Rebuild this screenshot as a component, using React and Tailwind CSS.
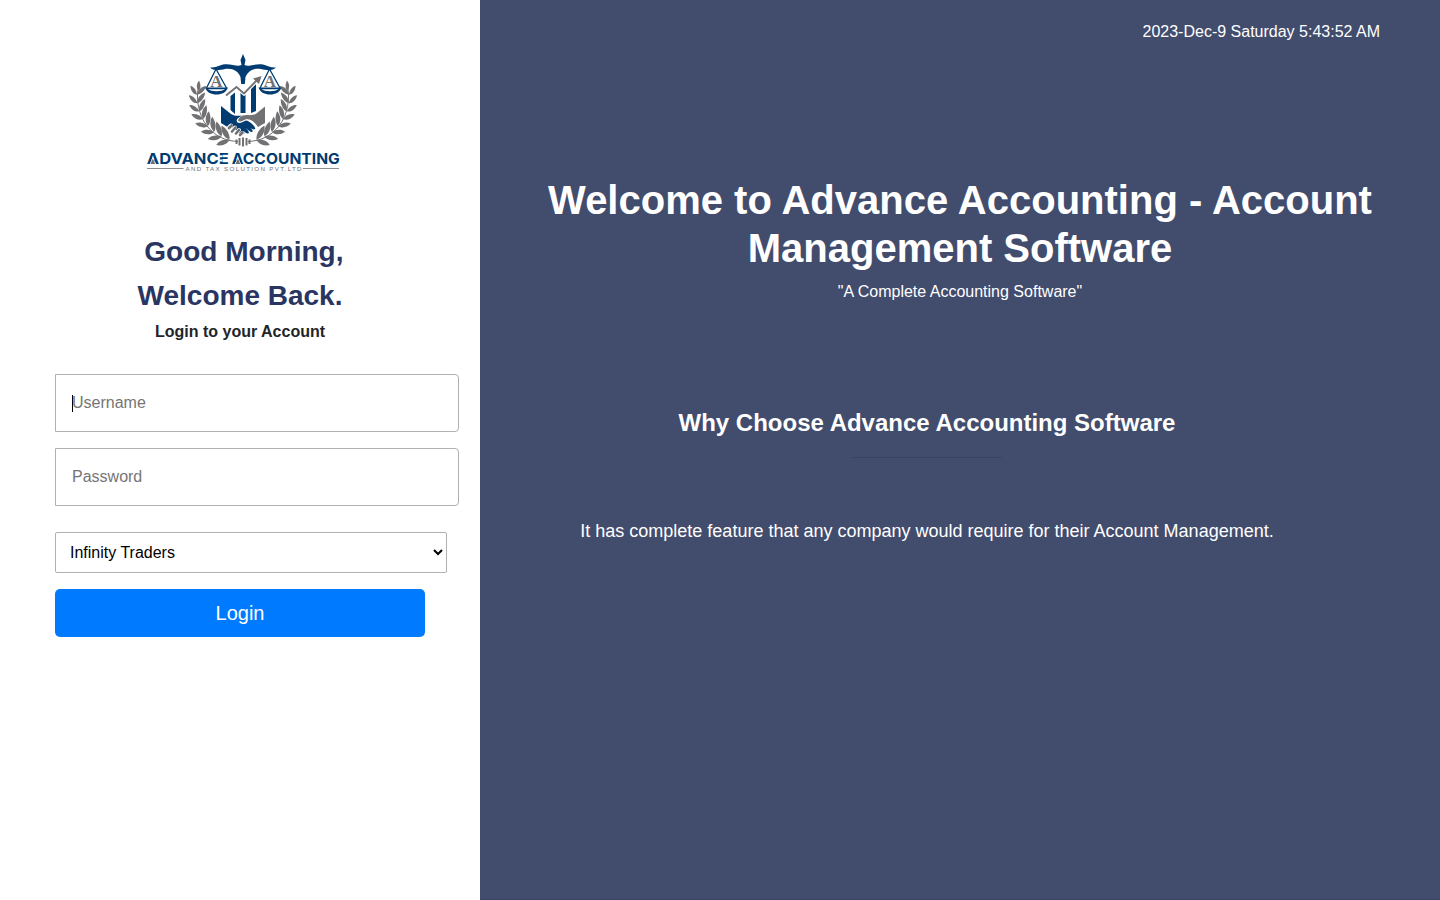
import React from 'react';

const NAVY = '#003c71';
const GRAY = '#717073';

// Leaves of one laurel branch, spaced along an arc that runs from the upper tip to the base.
const leaves = Array.from({ length: 8 }, (_, i) => {
  const deg = 184 - i * 10.8;
  const a = (deg * Math.PI) / 180;
  return { x: 243 + 46 * Math.cos(a), y: 97 + 44.5 * Math.sin(a), dir: deg + 90, size: 0.85 + i * 0.035 };
});

function Laurel() {
  return (
    <g fill={GRAY}>
      <path d="M198.500 86C196 99 198 114 207 126C215 136 225 141 238 141.500" fill="none" stroke={GRAY} strokeWidth="1" />
      {leaves.map((l, i) => (
        <g key={i} transform={`translate(${l.x} ${l.y}) rotate(${l.dir}) scale(${l.size})`}>
          <path d="M-1 0C-1 -4 3 -8 9 -8.500C8 -4 4 -1 -1 0Z" />
          <path d="M-1 0C4 0 9 4 10 10C5 9 0 5 -1 0Z" />
        </g>
      ))}
      <path d="M198.500 91C196 87 196.500 84 199 80.500C201 85 201 88 198.500 91Z" />
    </g>
  );
}

function Scale() {
  return (
    <g>
      <path d="M216 69L206.500 88M216 69L226.500 88" stroke={NAVY} strokeWidth="1.300" fill="none" />
      <path d="M205 87.500H228C226 92.500 222 94.500 216.500 94.500C211 94.500 207 92.500 205 87.500Z" fill={NAVY} />
      <path d="M208 89.300H225C222 91.800 211 91.800 208 89.300Z" fill="#fff" />
      <text x="216.300" y="86.500" textAnchor="middle" fontFamily="Liberation Serif, serif" fontSize="17" fontWeight="700" fill={GRAY}>A</text>
    </g>
  );
}

function Logo() {
  return (
    <svg width="206" height="130" viewBox="140 48 206 130" role="img" aria-label="Advance Accounting" className="block">
      <Laurel />
      <g transform="matrix(-1 0 0 1 486 0)"><Laurel /></g>
      <path d="M236.500 139.500v4.500M239.500 138v7.500M243 137.500v9M246.500 138v7.500M249.500 139.500v4.500" stroke={GRAY} strokeWidth="2" />
      <path d="M243 54L245.500 60L244.500 65C249 67.500 255 63 263 64.500C268 66 271 68 276 67.500C272 71.500 266 70 261 69C253 68 248 71 245.500 77L244.800 84H241.200L240.500 77C238 71 233 68 225 69C220 70 214 71.500 210 67.500C215 68 218 66 223 64.500C231 63 237 67.500 241.500 65L240.500 60Z" fill={NAVY} />
      <Scale />
      <g transform="translate(53.500 0)"><Scale /></g>
      <g fill={NAVY}>
        <path d="M230.500 96L235 92.500V114L230.500 110Z" />
        <path d="M240.500 91L245.500 94.500V113H240.500Z" />
        <path d="M251 88.500L256 84V111L251 113Z" />
      </g>
      <path d="M226 95.500L236.500 87L244 93.500L257.500 79.500" fill="none" stroke="#fff" strokeWidth="4" />
      <path d="M226 95.500L236.500 87L244 93.500L258.500 78.500" fill="none" stroke={GRAY} strokeWidth="1.800" />
      <path d="M253 78.500L261.500 76L259 84Z" fill={GRAY} />
      <path d="M265 106.500V123L258 127C254 121 251 119.500 246.500 119L241 121.500C237 122 237.500 119 241 116.500C247 113.500 253 117 257 113Z" fill={GRAY} />
      <path d="M221 106L231 114C234 116 238 116 242 115.500C237 118.500 235.500 120 237.500 122.500C240.500 124 243 121.500 246 120.500C249.500 120.500 256.500 127.500 255 129C253 130.500 250 127.500 248 126C255 131 253 133 250 131.500L245 127.500C251 132.500 249 134.500 246 133L241 129C247 133 244 136 241 134L232 127.500L227.500 127L221 123Z" fill={NAVY} />
      <path d="M228.500 128L231 125.500M231.500 131.500L235 127.500M235.500 134L239 130M240 135.500L242.500 133" stroke="#fff" strokeWidth="4" strokeLinecap="round" />
      <path d="M229 128L231.500 125.500M232 131.500L235.500 127.500M236 133.500L239 130M240 135L242.500 132.500" stroke={GRAY} strokeWidth="2.600" strokeLinecap="round" />
      <g fontFamily="Inter, sans-serif" fontSize="15" fontWeight="700" fill={NAVY}>
        <text x="146.800" y="163.800" textLength="82" lengthAdjust="spacingAndGlyphs">ADVANCE</text>
        <text x="231.800" y="163.800" textLength="108" lengthAdjust="spacingAndGlyphs">ACCOUNTING</text>
      </g>
      {/* Small peaks set inside the two initials */}
      <path d="M152.800 157L156 164.200H149.600ZM237.900 157L241.100 164.200H234.700Z" fill="#fff" />
      <path d="M152.800 158.500L155.200 164H150.400ZM237.900 158.500L240.300 164H235.500Z" fill={GRAY} />
      {/* Cut that splits the E into three bars */}
      <path d="M219 155.200h3.200v2.100h-3.200zM219 159.400h3.200v2.200h-3.200z" fill="#fff" />
      <path d="M147 168.500H183.500M303 168.500H339" stroke={GRAY} strokeWidth="1" opacity="0.8" />
      <text x="185.500" y="171" textLength="116" fontFamily="Liberation Sans, sans-serif" fontSize="6.200" fill={GRAY}>AND TAX SOLUTION PVT.LTD</text>
    </svg>
  );
}

const field = 'block h-[58px] w-[404px] rounded-r-[4px] border border-[#b0b0b0] bg-white px-4 text-base text-black placeholder:text-[#757575] outline-none';

export default function App() {
  return (
    <div className="flex h-[900px] w-full overflow-hidden bg-white font-['Liberation_Sans',sans-serif] text-base text-[#212529]">
      <main className="w-[480px] shrink-0 pt-12">
        <div className="pl-[140px]"><Logo /></div>
        <h1 className="mt-[52px] text-center text-[28px] leading-[44px] font-bold text-[#2a3562]">
          <span className="block pl-[7.78px]">Good Morning,</span>
          <span className="block">Welcome Back.</span>
        </h1>
        <p className="mt-0.5 text-center leading-6 font-bold">Login to your Account</p>
        <form className="mt-[30px] flex flex-col pl-[55px]" onSubmit={(e) => e.preventDefault()}>
          <div className="relative">
            <input className={field} placeholder="Username" aria-label="Username" />
            <span className="absolute top-[21px] left-[17px] h-[17px] w-px bg-black" />
          </div>
          <input className={`${field} mt-4`} type="password" placeholder="Password" aria-label="Password" />
          <select aria-label="Company" className="mt-[26px] h-[41px] w-[392px] rounded-[2px] border border-[#b0b0b0] bg-white pl-[10px] text-base text-black">
            <option>Infinity Traders</option>
          </select>
          <button className="mt-4 h-12 w-[370px] rounded-[5px] bg-[#007bff] text-xl text-white">Login</button>
        </form>
      </main>
      <section className="flex-1 border-b border-[#3a4466] bg-[#424c6d] text-center text-white">
        <p className="pt-5 pr-[60px] text-right leading-6">2023-Dec-9 Saturday 5:43:52 AM</p>
        <h2 className="mt-[132px] px-[60px] text-[40px] leading-[48px] font-bold">Welcome to Advance Accounting - Account Management Software</h2>
        <p className="mt-2 leading-6">"A Complete Accounting Software"</p>
        <div className="mt-[104px] w-[894px]">
          <h3 className="text-2xl leading-[29px] font-bold">Why Choose Advance Accounting Software</h3>
          <hr className="mx-auto mt-5 w-[150px] border-[#3b4363]" />
          <p className="mt-[60px] text-lg leading-[27px]">It has complete feature that any company would require for their Account Management.</p>
        </div>
      </section>
    </div>
  );
}
